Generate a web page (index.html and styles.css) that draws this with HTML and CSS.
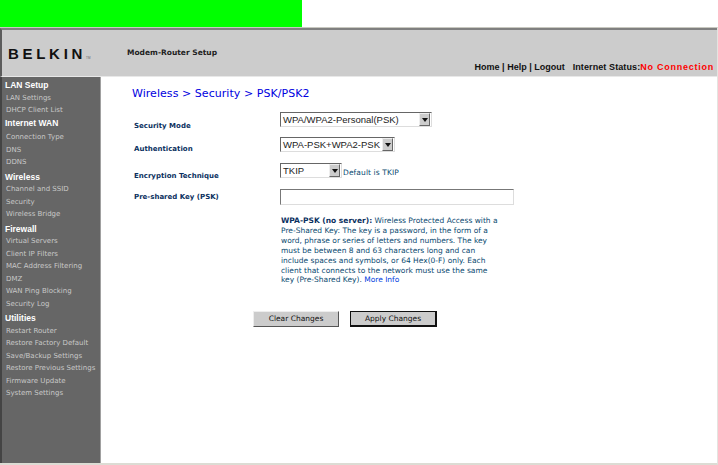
FILE: index.html
```html
<!DOCTYPE html>
<html lang="en">
<head>
<meta charset="utf-8">
<title>Belkin Modem-Router Setup</title>
<link rel="stylesheet" href="styles.css">
</head>
<body>
<div class="topbar"><div class="green"></div></div>
<div class="frame">
  <header class="header">
    <div class="brand">
      <span class="logo">BELKIN<sup class="tm">TM</sup></span>
      <span class="product">Modem-Router Setup</span>
    </div>
    <nav class="links">
      <span>Home | Help | Logout</span>
      <span class="status">Internet Status:<span class="red">No Connection</span></span>
    </nav>
  </header>
  <div class="main">
    <aside class="side">
      <div class="group first">
        <h3>LAN Setup</h3>
        <a>LAN Settings</a>
        <a>DHCP Client List</a>
      </div>
      <div class="group wan">
        <h3>Internet WAN</h3>
        <a>Connection Type</a>
        <a>DNS</a>
        <a>DDNS</a>
      </div>
      <div class="group">
        <h3>Wireless</h3>
        <a>Channel and SSID</a>
        <a>Security</a>
        <a>Wireless Bridge</a>
      </div>
      <div class="group">
        <h3>Firewall</h3>
        <a>Virtual Servers</a>
        <a>Client IP Filters</a>
        <a>MAC Address Filtering</a>
        <a>DMZ</a>
        <a>WAN Ping Blocking</a>
        <a>Security Log</a>
      </div>
      <div class="group">
        <h3>Utilities</h3>
        <a>Restart Router</a>
        <a>Restore Factory Default</a>
        <a>Save/Backup Settings</a>
        <a>Restore Previous Settings</a>
        <a>Firmware Update</a>
        <a>System Settings</a>
      </div>
    </aside>
    <main class="content">
      <h1>Wireless &gt; Security &gt; PSK/PSK2</h1>
      <div class="form">
        <label class="l1">Security Mode</label>
        <div class="sel s1"><span>WPA/WPA2-Personal(PSK)</span><i class="arrow"></i></div>
        <label class="l2">Authentication</label>
        <div class="sel s2"><span>WPA-PSK+WPA2-PSK</span><i class="arrow"></i></div>
        <label class="l3">Encryption Technique</label>
        <div class="rowc"><div class="sel s3"><span>TKIP</span><i class="arrow"></i></div><span class="hint">Default is TKIP</span></div>
        <label class="l4">Pre-shared Key (PSK)</label>
        <input class="key" type="text" aria-label="Pre-shared Key">
      </div>
      <p class="desc"><b>WPA-PSK (no server):</b> Wireless Protected Access with a<br>Pre-Shared Key: The key is a password, in the form of a<br>word, phrase or series of letters and numbers. The key<br>must be between 8 and 63 characters long and can<br>include spaces and symbols, or 64 Hex(0-F) only. Each<br>client that connects to the network must use the same<br>key (Pre-Shared Key). <a class="more">More Info</a></p>
      <div class="buttons">
        <button class="btn">Clear Changes</button>
        <button class="btn default">Apply Changes</button>
      </div>
    </main>
  </div>
</div>
</body>
</html>
```
FILE: styles.css
```css
* { box-sizing: border-box; }
html, body { margin: 0; padding: 0; background: #fff; }
body { width: 718px; height: 465px; overflow: hidden; font-family: "DejaVu Sans", sans-serif; }
.topbar { height: 27px; background: #fff; }
.green { width: 302px; height: 27px; background: #00ff00; }
.frame { height: 438px; width: 718px; border-top: 1px solid #c8c8c0; display: flex; flex-direction: column; border-bottom: 2px solid #dcdcd4; border-right: 1px solid #e4e4e0; }
.header { height: 49px; flex: none; background: #ccc; border-top: 2px solid #808080; border-bottom: 1px solid #e8e8e8; border-left: 2px solid #5c5c5c; display: flex; flex-direction: column; position: relative; }
.brand { height: 32px; display: flex; align-items: flex-start; }
.logo { margin: 16px 0 0 6px; width: 119px; font: bold 15px/16px "Liberation Sans", sans-serif; letter-spacing: 3.7px; color: #111; white-space: nowrap; }
.tm { font-size: 3px; font-weight: normal; letter-spacing: 0; color: #666; vertical-align: baseline; }
.product { margin-top: 18px; font: bold 7.5px/10px "DejaVu Sans", sans-serif; color: #222; white-space: nowrap; }
.links { margin: -1px 3px 0 0; display: flex; justify-content: flex-end; gap: 8px; font: bold 9px/12px "Liberation Sans", sans-serif; color: #111; white-space: nowrap; }
.status { letter-spacing: 0.1px; }
.red { color: #f00; letter-spacing: 0.75px; }
.main { flex: 1; display: flex; min-height: 0; }
.side { width: 101px; flex: none; background: #666; border-left: 2px solid #444; border-right: 1px solid #a0a0a0; padding-top: 2px; color: #ddd; }
.group { margin-top: 2px; }
.group.first, .group.wan { margin-top: 0; }
.side h3 { margin: 0; height: 12.5px; padding-left: 3px; font: bold 8.5px/12.5px "Liberation Sans", sans-serif; color: #fff; white-space: nowrap; }
.side .wan h3 { margin-bottom: 2px; }
.side a { display: block; height: 12.5px; padding-left: 4px; font: 7px/12.5px "DejaVu Sans", sans-serif; color: #c8c8c8; white-space: nowrap; }
.content { flex: 1; padding: 9px 0 0 31px; min-width: 0; }
h1 { margin: 0; font: 11px/16px "DejaVu Sans", sans-serif; letter-spacing: 0.05px; color: #0000e0; white-space: nowrap; }
.form { margin-top: 10px; display: grid; grid-template-columns: 148px 1fr; grid-template-rows: 25px 26px 26px 20px; }
.form label { padding: 8px 0 0 2px; font: bold 7px/12px "DejaVu Sans", sans-serif; color: #0a3060; white-space: nowrap; }
.form .l2 { padding-top: 6px; }
.form .l3 { padding-top: 7px; }
.form .l4 { padding-top: 2px; }
.sel { height: 15px; display: flex; align-items: center; justify-content: space-between; border: 1px solid; border-color: #666 #ddd #ddd #666; background: #fff; font: 9.5px/13px "Liberation Sans", sans-serif; color: #222; padding: 0 1px 0 2px; white-space: nowrap; }
.s1 { width: 152px; } .s2 { width: 115px; } .s3 { width: 62px; }
.arrow { width: 11px; height: 13px; background: #ccc; border: 1px solid; border-color: #eee #666 #666 #eee; position: relative; }
.arrow::after { content: ""; position: absolute; left: 2px; top: 4px; border: 3px solid transparent; border-top: 4px solid #111; border-bottom: 0; }
.rowc { display: flex; align-items: flex-start; gap: 1px; }
.hint { margin-top: 4px; font: 7.5px/12px "DejaVu Sans", sans-serif; letter-spacing: 0.1px; color: #0a4a70; }
.key { width: 234px; height: 16px; margin: 0; padding: 0; border: 1px solid; border-color: #777 #ddd #ddd #777; background: #fff; }
.desc { margin: 7px 0 0 149px; font: 7.5px/9.9px "DejaVu Sans", sans-serif; color: #0a4a70; white-space: nowrap; }
.desc b { color: #0a3060; }
.more { color: #0040e0; }
.buttons { margin: 26px 0 0 121px; display: flex; gap: 11px; }
.btn { width: 86px; height: 16px; padding: 0; background: #ccc; border: 1px solid; border-color: #eee #555 #555 #eee; font: 7.5px/12px "DejaVu Sans", sans-serif; color: #111; }
.default { width: 87px; border-width: 1px 2px 2px 1px; border-color: #111; }
```
